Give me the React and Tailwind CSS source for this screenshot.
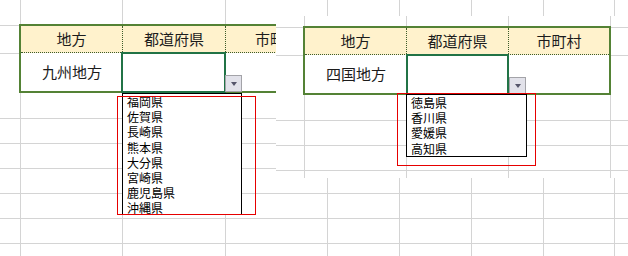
import React from "react";

const LINE = "border-[#d4d4d4]";

function Row({ h, widths, bottom = true }) {
  return (
    <div className={`flex shrink-0 ${h} ${bottom ? "border-b border-[#d4d4d4]" : ""}`}>
      {widths.map((w, i) => (
        <div key={i} className={`shrink-0 h-full border-r border-[#d4d4d4] ${w}`} />
      ))}
      <div className="flex-1" />
    </div>
  );
}

function Gutter({ w }) {
  return (
    <div className={`flex flex-col shrink-0 ${w}`}>
      <div className="h-[2px] border-b border-[#d4d4d4]" />
      <div className="h-[28px] border-b border-[#d4d4d4]" />
      <div className="flex-1" />
    </div>
  );
}

function Table({ cols, region }) {
  return (
    <div className="flex flex-col shrink-0 border-2 border-[#548235] bg-white">
      <div className="flex h-[27px] shrink-0 bg-[#fff2cc] border-b border-dotted border-[#3d5c2a]">
        {cols.map((c, i) => (
          <div
            key={i}
            className={`shrink-0 flex items-center justify-center whitespace-nowrap text-[15px] text-[#1c1c1c] ${c.w} ${
              i < cols.length - 1 ? "border-r border-dotted border-[#3d5c2a]" : ""
            }`}
          >
            {c.label}
          </div>
        ))}
      </div>
      <div className="flex flex-1">
        <div className={`shrink-0 flex items-center justify-center text-[15px] text-[#1c1c1c] ${cols[0].w}`}>
          {region}
        </div>
      </div>
    </div>
  );
}

function DropButton({ className }) {
  return (
    <div
      className={`absolute w-[17px] h-[17px] flex items-center justify-center bg-[#e2e2ea] border border-[#a3a3a8] ${className}`}
    >
      <div className="mt-[1px] w-0 h-0 border-l-[3.5px] border-r-[3.5px] border-t-[4px] border-l-transparent border-r-transparent border-t-[#55556a]" />
    </div>
  );
}

function List({ items, className }) {
  return (
    <div className={`absolute bg-white border border-black flex flex-col pl-[4px] ${className}`}>
      {items.map((t) => (
        <div key={t} className="h-[15.2px] leading-[15.2px] text-[12px] text-black whitespace-nowrap">
          {t}
        </div>
      ))}
    </div>
  );
}

export default function App() {
  const bgRows = Array.from({ length: 11 }, (_, i) => i);
  return (
    <div className="relative w-[628px] h-[256px] overflow-hidden bg-white font-['Noto_Sans_CJK_JP','Noto_Sans',sans-serif]">
      {/* background sheet grid */}
      <div className="flex flex-col">
        {bgRows.map((i) => (
          <Row
            key={i}
            h={i === 0 ? "h-[19px]" : "h-[25px]"}
            widths={["w-[328px]", "w-[72px]", "w-[72px]", "w-[72px]", "w-[71px]"]}
          />
        ))}
      </div>

      {/* left screenshot */}
      <div className="absolute left-0 top-0 w-[276px] h-[256px] overflow-hidden bg-white">
        <div className="flex flex-col">
          <Row h="h-[24px]" bottom={false} widths={["w-[21px]", "w-[102px]", "w-[103px]", "w-[103px]"]} />
          <div className="flex h-[69px] shrink-0">
            <Gutter w="w-[19px]" />
            <Table
              region="九州地方"
              cols={[
                { w: "w-[102px]", label: "地方" },
                { w: "w-[103px]", label: "都道府県" },
                { w: "w-[103px]", label: "市町村" },
              ]}
            />
          </div>
          <Row h="h-[26px]" widths={["w-[21px]", "w-[102px]", "w-[103px]", "w-[103px]"]} />
          <Row h="h-[25px]" widths={["w-[21px]", "w-[102px]", "w-[103px]", "w-[103px]"]} />
          <Row h="h-[25px]" widths={["w-[21px]", "w-[102px]", "w-[103px]", "w-[103px]"]} />
          <Row h="h-[25px]" widths={["w-[21px]", "w-[102px]", "w-[103px]", "w-[103px]"]} />
          <Row h="h-[25px]" widths={["w-[21px]", "w-[102px]", "w-[103px]", "w-[103px]"]} />
          <Row h="h-[25px]" widths={["w-[21px]", "w-[102px]", "w-[103px]", "w-[103px]"]} />
          <Row h="h-[25px]" widths={["w-[21px]", "w-[102px]", "w-[103px]", "w-[103px]"]} />
        </div>
        <div className="absolute left-[121px] top-[52px] w-[105px] h-[41px] border-2 border-[#217346]" />
        <DropButton className="left-[225px] top-[75px]" />
        <List
          className="left-[122px] top-[93px] w-[120px] h-[122px]"
          items={["福岡県", "佐賀県", "長崎県", "熊本県", "大分県", "宮崎県", "鹿児島県", "沖縄県"]}
        />
        <div className="absolute left-[117px] top-[96px] w-[139px] h-[119px] border border-[#e60000]" />
      </div>

      {/* right screenshot */}
      <div className="absolute left-[276px] top-[16px] w-[352px] h-[162px] overflow-hidden bg-white">
        <div className="flex flex-col">
          <Row h="h-[10px]" bottom={false} widths={["w-[29px]", "w-[102px]", "w-[102px]", "w-[102px]"]} />
          <div className="flex h-[69px] shrink-0">
            <Gutter w="w-[27px]" />
            <Table
              region="四国地方"
              cols={[
                { w: "w-[102px]", label: "地方" },
                { w: "w-[102px]", label: "都道府県" },
                { w: "w-[100px]", label: "市町村" },
              ]}
            />
            <div className="flex-1 flex flex-col">
              <div className="h-[2px] border-b border-[#d4d4d4]" />
              <div className="h-[28px] border-b border-[#d4d4d4]" />
            </div>
          </div>
          <Row h="h-[26px]" widths={["w-[29px]", "w-[102px]", "w-[102px]", "w-[102px]"]} />
          <Row h="h-[25px]" widths={["w-[29px]", "w-[102px]", "w-[102px]", "w-[102px]"]} />
          <Row h="h-[25px]" widths={["w-[29px]", "w-[102px]", "w-[102px]", "w-[102px]"]} />
          <Row h="h-[25px]" widths={["w-[29px]", "w-[102px]", "w-[102px]", "w-[102px]"]} />
        </div>
        <div className="absolute left-[130px] top-[38px] w-[103px] h-[41px] border-2 border-[#217346]" />
        <DropButton className="left-[233px] top-[61px]" />
        <List
          className="left-[130px] top-[78px] w-[121px] h-[63px]"
          items={["徳島県", "香川県", "愛媛県", "高知県"]}
        />
        <div className="absolute left-[121px] top-[77px] w-[139px] h-[73px] border border-[#e60000]" />
      </div>
    </div>
  );
}
